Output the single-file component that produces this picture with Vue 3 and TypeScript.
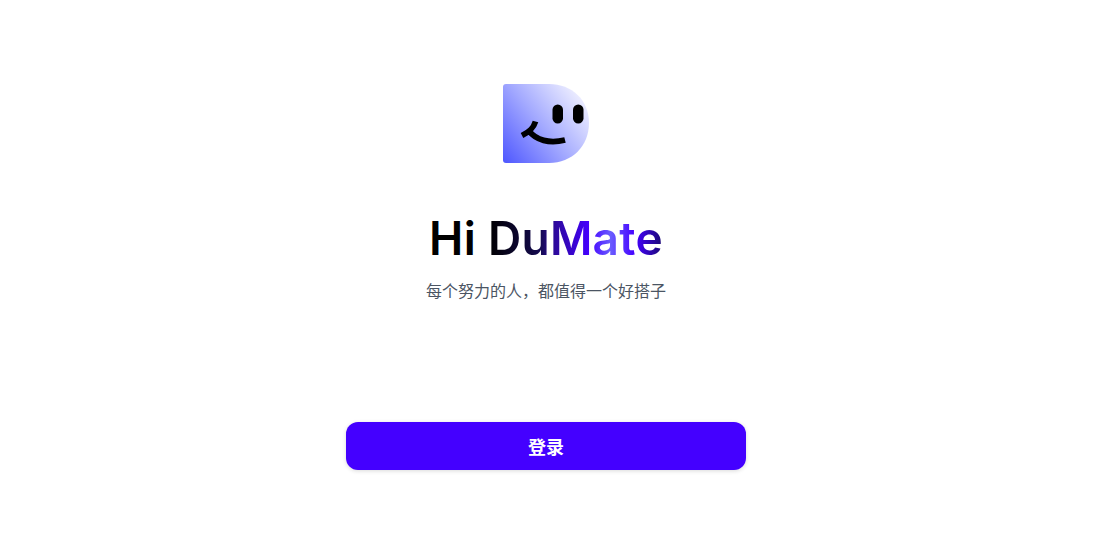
<script setup lang="ts">
const title = 'Hi '
const brand = 'DuMate'
const tagline = '每个努力的人，都值得一个好搭子'
</script>

<template>
  <main class="page">
    <svg class="logo" width="88" height="81" viewBox="0 0 88 81" fill="none" aria-hidden="true">
      <defs>
        <linearGradient id="logo-fill" x1="0" y1="80" x2="87" y2="12" gradientUnits="userSpaceOnUse">
          <stop offset="0" stop-color="#4c55ff" />
          <stop offset="0.5" stop-color="#a4aaff" />
          <stop offset="0.75" stop-color="#ced1ff" />
          <stop offset="1" stop-color="#f7f7ff" />
        </linearGradient>
      </defs>
      <path d="M4 1H47C70 1 87 17 87 40C87 63 70 80 47 80H4C2 80 1 79 1 77V4C1 2 2 1 4 1Z" fill="url(#logo-fill)" />
      <rect x="50.500" y="21.500" width="10.500" height="19" rx="5.250" fill="#000" />
      <rect x="71" y="21.500" width="10.500" height="19" rx="5.250" fill="#000" />
      <path d="M33.500 38.500C31.500 45 28 48.500 20 52.500M27 48C34 57 47 61 63 57" stroke="#000" stroke-width="5.800" />
    </svg>
    <h1 class="title">{{ title }}<span class="brand">{{ brand }}</span></h1>
    <p class="tagline">{{ tagline }}</p>
    <button class="login" type="button">登录</button>
  </main>
</template>

<style scoped>
.page {
  box-sizing: border-box;
  width: 1092px;
  height: 550px;
  padding-top: 83px;
  display: flex;
  flex-direction: column;
  align-items: center;
  background: #fff;
}
.logo {
  display: block;
  flex: none;
}
.title {
  margin: 44px 0 0;
  font-family: "Inter", "Liberation Sans", sans-serif;
  font-size: 46px;
  line-height: 60px;
  font-weight: 600;
  letter-spacing: 0.3px;
  color: #000;
  white-space: pre;
}
.brand {
  background: linear-gradient(90deg, #000 0%, #140a50 30%, #2a0a90 36%, #4400ff 58%, #6a5cff 70%, #4400ff 84%, #1a0a70 100%);
  -webkit-background-clip: text;
  background-clip: text;
  color: transparent;
}
.tagline {
  margin: 10px 0 0;
  font-family: "Noto Sans CJK SC", sans-serif;
  font-size: 16px;
  line-height: 24px;
  color: #4b5563;
}
.login {
  margin-top: 120px;
  width: 400px;
  height: 48px;
  border: 0;
  border-radius: 12px;
  background: #4400ff;
  color: #fff;
  font-family: "Noto Sans CJK SC", sans-serif;
  font-size: 18px;
  font-weight: 700;
  box-shadow: 0 1px 4px rgba(0, 0, 0, 0.15);
}
</style>
